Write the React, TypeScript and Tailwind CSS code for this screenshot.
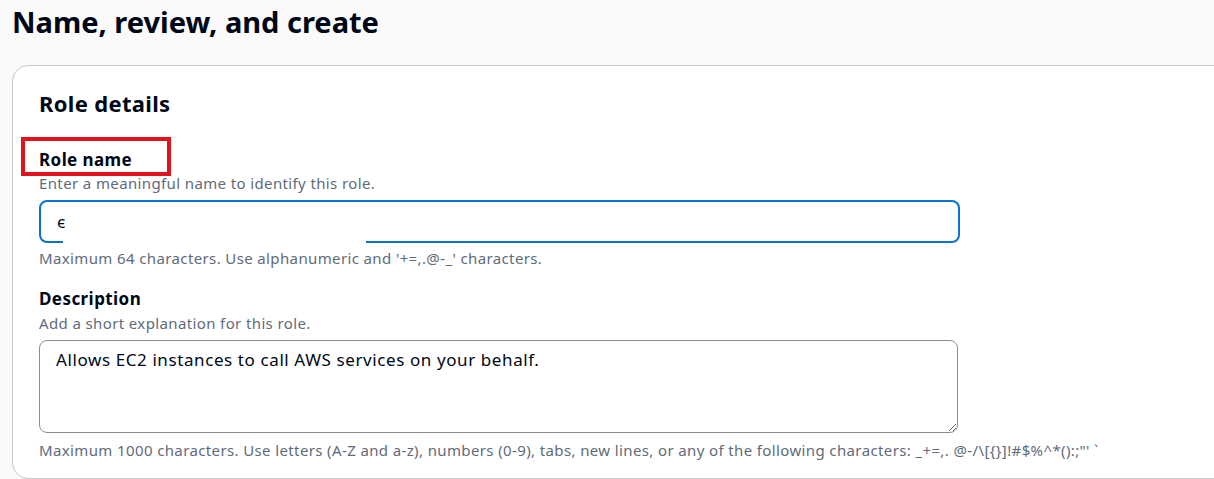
const FONT = "font-['Noto_Sans',_'Open_Sans',_sans-serif]";

const DESC_HELP =
  "Maximum 1000 characters. Use letters (A-Z and a-z), numbers (0-9), tabs, new lines, or any of the following characters: _+=,. @-/\\[{}]!#$%^*():;\"' `";

function Helper({ children, className = "" }: { children: React.ReactNode; className?: string }) {
  return (
    <p className={`text-[15px] leading-[20px] tracking-[0.025em] text-[#5f6b7a] ${className}`}>{children}</p>
  );
}

function Label({ children, className = "" }: { children: React.ReactNode; className?: string }) {
  return (
    <div className={`text-[17px] font-bold leading-[22px] tracking-[0.025em] text-[#000716] ${className}`}>
      {children}
    </div>
  );
}

export default function App() {
  return (
    <div className={`h-[479px] overflow-hidden bg-[#fafafa] pl-3 ${FONT}`}>
      <h1 className="text-[29px] font-bold leading-[44px] text-[#000716]">Name, review, and create</h1>

      <div className="mt-[21px] h-[414px] w-[1230px] rounded-[16px] border border-[#c6c6cd] bg-white pl-[26px] pt-[23px]">
        <h2 className="text-[22px] font-bold leading-[28px] tracking-[0.015em] text-[#000716]">Role details</h2>

        <div className="relative mt-[32px] w-fit">
          <Label>Role name</Label>
          <span className="pointer-events-none absolute left-[-18px] top-[-12px] h-[39px] w-[150px] border-[4px] border-[#e3121b]" />
        </div>
        <Helper className="mt-[2px]">Enter a meaningful name to identify this role.</Helper>

        <div className="relative mt-[7px] flex h-[43px] w-[921px] items-center rounded-[8px] border-2 border-[#0972d3] pl-[16px]">
          <span className="text-[17px] leading-[22px] text-[#000716]">ϵ</span>
          <span className="absolute bottom-[-2px] left-[22px] h-[2px] w-[303px] bg-white" />
        </div>
        <Helper className="mt-[5px]">
          Maximum 64 characters. Use alphanumeric and '+=,.@-_' characters.
        </Helper>

        <Label className="mt-[20px]">Description</Label>
        <Helper className="mt-[3px]">Add a short explanation for this role.</Helper>

        <textarea
          readOnly
          defaultValue="Allows EC2 instances to call AWS services on your behalf."
          className="mt-[7px] block h-[93px] w-[919px] rounded-[8px] border border-[#8c8c94] px-[16px] pt-[8px] text-[17px] leading-[22px] tracking-[0.035em] text-[#000716] outline-none"
        />
        <Helper className="mt-[7px]">{DESC_HELP}</Helper>
      </div>
    </div>
  );
}
